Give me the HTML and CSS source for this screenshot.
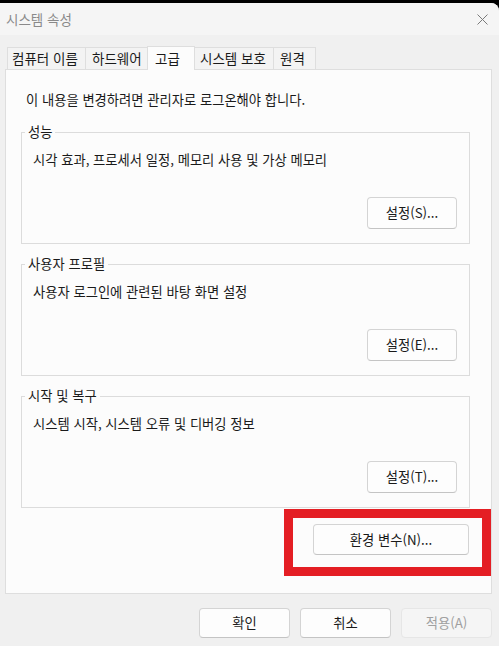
FILE: index.html
```html
<!DOCTYPE html>
<html lang="ko">
<head>
<meta charset="utf-8">
<title>시스템 속성</title>
<link rel="stylesheet" href="styles.css">
</head>
<body>
<div class="window">
  <div class="titlebar">
    <span class="title">시스템 속성</span>
    <svg class="close" width="11" height="11" viewBox="0 0 11 11"><path d="M0.5 0.5 L10.5 10.5 M10.5 0.5 L0.5 10.5" stroke="#7a7a7a" stroke-width="1" fill="none"/></svg>
  </div>
  <div class="content">
    <div class="tabs">
      <div class="tab tab-name">컴퓨터 이름</div>
      <div class="tab tab-hw">하드웨어</div>
      <div class="tab tab-adv active">고급</div>
      <div class="tab tab-prot">시스템 보호</div>
      <div class="tab tab-remote">원격</div>
    </div>
    <div class="panel">
      <p class="notice">이 내용을 변경하려면 관리자로 로그온해야 합니다.</p>
      <section class="group">
        <div class="group-head"><span class="group-title">성능</span></div>
        <div class="group-box">
          <p class="desc">시각 효과, 프로세서 일정, 메모리 사용 및 가상 메모리</p>
          <div class="group-actions"><button class="btn">설정(S)...</button></div>
        </div>
      </section>
      <section class="group">
        <div class="group-head"><span class="group-title">사용자 프로필</span></div>
        <div class="group-box">
          <p class="desc">사용자 로그인에 관련된 바탕 화면 설정</p>
          <div class="group-actions"><button class="btn">설정(E)...</button></div>
        </div>
      </section>
      <section class="group">
        <div class="group-head"><span class="group-title">시작 및 복구</span></div>
        <div class="group-box">
          <p class="desc">시스템 시작, 시스템 오류 및 디버깅 정보</p>
          <div class="group-actions"><button class="btn">설정(T)...</button></div>
        </div>
      </section>
      <div class="env-row">
        <div class="highlight">
          <button class="btn btn-env">환경 변수(N)...</button>
        </div>
      </div>
    </div>
    <div class="footer">
      <button class="btn btn-foot">확인</button>
      <button class="btn btn-foot">취소</button>
      <button class="btn btn-foot disabled">적용(A)</button>
    </div>
  </div>
</div>
</body>
</html>
```
FILE: styles.css
```css
html {
  background: #000;
}
body {
  margin: 0;
  font-family: "Noto Sans CJK KR", "Noto Sans", sans-serif;
  font-size: 13.3px;
  color: #1a1a1a;
}
p {
  margin: 0;
}
.window {
  margin-top: 3px;
  width: 499px;
  height: 643px;
  background: #f0f0f0;
  border-top-right-radius: 8px;
  overflow: hidden;
}
.titlebar {
  height: 32px;
  display: flex;
  align-items: center;
  justify-content: space-between;
  padding: 0 11px 0 6px;
  background: #f5f5f5;
}
.title {
  color: #8a8a8a;
  font-size: 13.5px;
  line-height: 20px;
}
.close {
  display: block;
}
.content {
  padding-top: 11px;
}
.tabs {
  display: flex;
  align-items: flex-end;
  margin-left: 7px;
  height: 23px;
}
.tab {
  box-sizing: border-box;
  height: 22px;
  line-height: 21px;
  font-size: 13.5px;
  padding-left: 5px;
  background: #f3f3f3;
  border: 1px solid #dedede;
  border-bottom: none;
  margin-right: -1px;
  white-space: nowrap;
}
.tab-name { width: 79px; padding-left: 4px; }
.tab-hw { width: 63px; padding-left: 6px; }
.tab-adv { width: 48px; padding-left: 7px; }
.tab-prot { width: 80px; padding-left: 5px; }
.tab-remote { width: 43px; padding-left: 6px; }
.tab.active {
  height: 24px;
  margin-bottom: -1px;
  background: #fcfcfc;
  position: relative;
  z-index: 1;
  line-height: 22px;
}
.panel {
  box-sizing: border-box;
  margin-left: 5px;
  width: 487px;
  background: #fcfcfc;
  border: 1px solid #dedede;
  padding: 0 0 17px 0;
}
.notice {
  margin: 20px 0 0 20px;
  line-height: 20px;
}
.group {
  margin: 14px 21px 0 15px;
}
.group + .group {
  margin-top: 12px;
}
.group-head {
  display: flex;
  height: 16px;
}
.group-head::before,
.group-head::after {
  content: "";
  margin-top: 8px;
  border-top: 1px solid #dcdcdc;
}
.group-head::before {
  width: 3px;
  border-left: 1px solid #dcdcdc;
}
.group-head::after {
  flex: 1;
  border-right: 1px solid #dcdcdc;
}
.group-title {
  padding: 0 3px;
  line-height: 16px;
}
.group-box {
  border: 1px solid #dcdcdc;
  border-top: none;
  padding: 10px 12px 14px 11px;
}
.desc {
  line-height: 20px;
}
.group-actions {
  display: flex;
  justify-content: flex-end;
  margin-top: 27px;
}
.btn {
  box-sizing: border-box;
  font-family: inherit;
  font-size: 13.3px;
  color: #1a1a1a;
  background: #fdfdfd;
  border: 1px solid #d4d4d4;
  border-bottom-color: #c4c4c4;
  border-radius: 4px;
  width: 90px;
  height: 32px;
  padding: 0;
  line-height: 20px;
}
.env-row {
  display: flex;
  justify-content: flex-end;
  margin-top: 1px;
}
.highlight {
  border: 9px solid #e41e24;
  padding: 6px 13px 12px 20px;
  display: flex;
}
.btn-env {
  width: 156px;
  height: 31px;
}
.footer {
  display: flex;
  justify-content: flex-end;
  gap: 10px;
  margin-top: 14px;
  padding-right: 7px;
}
.btn-foot {
  width: 91px;
  height: 30px;
}
.btn-foot.disabled {
  color: #a0a0a0;
  background: #f5f5f5;
  border-color: #e6e6e6;
}
```
